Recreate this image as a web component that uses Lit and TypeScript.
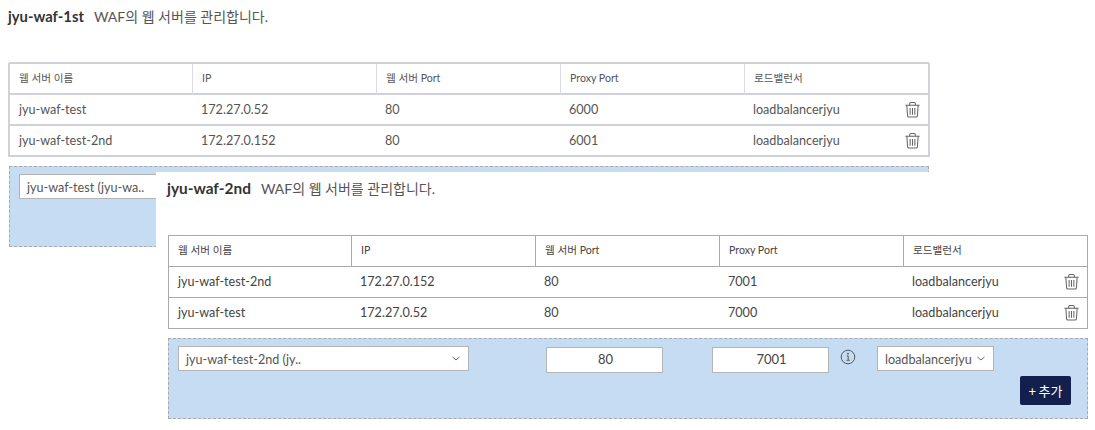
import { LitElement, css, html, svg } from 'lit';
import { customElement, property } from 'lit/decorators.js';

interface ServerRow {
  name: string;
  ip: string;
  port: string;
  proxy: string;
  lb: string;
}

const trashIcon = svg`
  <path d="M1.500 4.500h15" />
  <path d="M6 4.500V2.800c0-.8.5-1.300 1.300-1.300h3.400c.8 0 1.300.5 1.300 1.300v1.700" />
  <path d="M3 4.500l.8 11.200c.1.800.6 1.300 1.400 1.300h7.600c.8 0 1.300-.5 1.400-1.300L15 4.500" />
  <path d="M6.500 7.500v7M9 7.500v7M11.500 7.500v7" />
`;

@customElement('waf-panel')
export class WafPanel extends LitElement {
  @property() title = '';
  @property({ type: Array }) rows: ServerRow[] = [];
  @property() selected = '';
  @property() port = '';
  @property() proxy = '';

  render() {
    return html`
      <div class="head">
        <span class="name">${this.title}</span>
        <span class="desc">WAF의 웹 서버를 관리합니다.</span>
      </div>
      <div class="table">
        <div class="row th">
          <div class="cell">웹 서버 이름</div>
          <div class="cell">IP</div>
          <div class="cell">웹 서버 Port</div>
          <div class="cell">Proxy Port</div>
          <div class="cell">로드밸런서</div>
        </div>
        ${this.rows.map(
          (r) => html`
            <div class="row td">
              <div class="cell">${r.name}</div>
              <div class="cell">${r.ip}</div>
              <div class="cell">${r.port}</div>
              <div class="cell">${r.proxy}</div>
              <div class="cell last">
                ${r.lb}
                <svg class="trash" viewBox="0 0 18 18">${trashIcon}</svg>
              </div>
            </div>
          `,
        )}
      </div>
      <div class="form">
        <div class="fields">
          <div class="select wide">
            <span>${this.selected}</span>
            <svg class="chev" viewBox="0 0 8 5"><path d="M.5 1l3.500 3 3.500-3" /></svg>
          </div>
          <div class="input first">${this.port}</div>
          <div class="input second">${this.proxy}</div>
          <svg class="info" viewBox="0 0 16 16">
            <circle cx="8" cy="8" r="6.800" />
            <path d="M6.800 7h1.400v4.200M6.500 11.300h3.200" />
            <circle class="dot" cx="8" cy="4.700" r=".9" />
          </svg>
          <div class="select narrow">
            <span>loadbalancerjyu</span>
            <svg class="chev" viewBox="0 0 8 5"><path d="M.5 1l3.500 3 3.500-3" /></svg>
          </div>
        </div>
        <button class="add">+ 추가</button>
      </div>
    `;
  }

  static styles = css`
    :host {
      display: block;
      box-sizing: border-box;
      width: 939px;
      padding: 0 0 12px 9px;
      background: #fff;
      font-family: 'Lato', 'Noto Sans CJK KR', sans-serif;
      font-size: 12.6px;
      color: #444;
      --line: #aaa;
      --sep: #aaa;
      --text: #444;
      --name-size: 15.4px;
    }
    :host([faded]) {
      --line: #cfd1dd;
      --sep: #dcdde4;
      --text: #555;
      --name-size: 14.8px;
    }
    .head {
      display: flex;
      align-items: baseline;
      height: 63px;
      padding: 6px 0 0 0;
      margin-left: -1px;
      box-sizing: border-box;
    }
    .name {
      font-size: var(--name-size);
      font-weight: 700;
      color: #333;
      margin-right: 10px;
    }
    .desc {
      font-size: 14px;
      color: #555;
    }
    .table {
      width: 920px;
      border: 1px solid var(--line);
      box-sizing: border-box;
    }
    /* the first panel's lines read about 2px wide in the reference */
    :host([faded]) .table {
      box-shadow:
        -1px 0 0 var(--line),
        1px 0 0 var(--line),
        0 -1px 0 var(--line),
        inset 0 -1px 0 var(--line);
    }
    :host([faded]) .td {
      box-shadow: 0 -1px 0 var(--line);
    }
    .row {
      display: grid;
      grid-template-columns: 182px 184px 184px 184px 1fr;
      color: var(--text);
    }
    .th {
      height: 30px;
      font-size: 10.6px;
    }
    .td {
      height: 31px;
      box-sizing: border-box;
      border-top: 1px solid var(--line);
      padding-bottom: 1px;
      align-items: center;
    }
    .cell {
      padding-left: 9px;
      white-space: nowrap;
    }
    .th .cell {
      display: flex;
      align-items: center;
      box-sizing: border-box;
      padding-bottom: 3px;
    }
    .th .cell + .cell {
      border-left: 1px solid var(--sep);
    }
    .last {
      display: flex;
      align-items: center;
      justify-content: space-between;
      padding-right: 7px;
    }
    .trash {
      width: 17px;
      height: 17px;
      fill: none;
      stroke: #666;
      stroke-width: 1.100;
    }
    .form {
      width: 920px;
      height: 81px;
      margin-top: 9px;
      padding: 7px 16px 12px 9px;
      background: #c5dcf3;
      border: 1px dashed #aaa;
      box-sizing: border-box;
    }
    .fields {
      display: flex;
      align-items: flex-start;
    }
    .select {
      height: 25px;
      background: #fff;
      border: 1px solid #b4b4b4;
      box-sizing: border-box;
      display: flex;
      align-items: center;
      justify-content: space-between;
      color: #555;
      white-space: nowrap;
    }
    .select span {
      padding-top: 1px;
    }
    .wide {
      width: 291px;
      padding: 0 8px 0 7px;
    }
    .narrow {
      width: 117px;
      padding: 0 8px 0 7px;
    }
    .chev {
      width: 8px;
      height: 5px;
      fill: none;
      stroke: #666;
      flex: none;
    }
    .input {
      height: 26px;
      width: 117px;
      margin-top: 1px;
      padding: 0 0 2px 2px;
      background: #fff;
      border: 1px solid #b4b4b4;
      box-sizing: border-box;
      display: flex;
      align-items: center;
      justify-content: center;
      color: #444;
      font-size: 13px;
    }
    .first {
      margin-left: 77px;
    }
    .second {
      margin-left: 49px;
    }
    .info {
      width: 16px;
      height: 16px;
      margin: 3px 21px 0 11px;
      flex: none;
      fill: none;
      stroke: #555;
    }
    .info .dot {
      fill: #555;
      stroke: none;
    }
    .add {
      display: block;
      margin: 3px 0 0 auto;
      width: 51px;
      height: 29px;
      background: #131f4d;
      color: #fff;
      border: none;
      border-radius: 2px;
      padding: 0;
      font: inherit;
      font-size: 13px;
      word-spacing: -1px;
    }
  `;
}

@customElement('app-root')
export class AppRoot extends LitElement {
  private first: ServerRow[] = [
    { name: 'jyu-waf-test', ip: '172.27.0.52', port: '80', proxy: '6000', lb: 'loadbalancerjyu' },
    { name: 'jyu-waf-test-2nd', ip: '172.27.0.152', port: '80', proxy: '6001', lb: 'loadbalancerjyu' },
  ];
  private second: ServerRow[] = [
    { name: 'jyu-waf-test-2nd', ip: '172.27.0.152', port: '80', proxy: '7001', lb: 'loadbalancerjyu' },
    { name: 'jyu-waf-test', ip: '172.27.0.52', port: '80', proxy: '7000', lb: 'loadbalancerjyu' },
  ];

  render() {
    return html`
      <waf-panel
        faded
        title="jyu-waf-1st"
        .rows=${this.first}
        selected="jyu-waf-test (jyu-wa.."
        port="80"
        proxy="6001"
      ></waf-panel>
      <waf-panel
        class="front"
        title="jyu-waf-2nd"
        .rows=${this.second}
        selected="jyu-waf-test-2nd (jy.."
        port="80"
        proxy="7001"
      ></waf-panel>
    `;
  }

  static styles = css`
    :host {
      display: block;
      position: relative;
      width: 1095px;
      height: 430px;
      overflow: hidden;
      background: #fff;
    }
    .front {
      position: absolute;
      left: 156px;
      top: 172px;
      width: 939px;
      padding-left: 12px;
    }
  `;
}

declare global {
  interface HTMLElementTagNameMap {
    'app-root': AppRoot;
    'waf-panel': WafPanel;
  }
}
